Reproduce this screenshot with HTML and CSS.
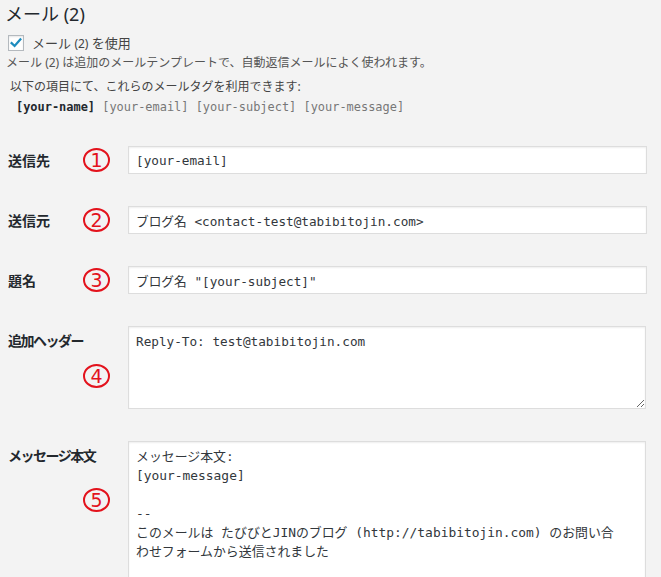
FILE: index.html
```html
<!DOCTYPE html>
<html lang="ja">
<head>
<meta charset="utf-8">
<title>メール (2)</title>
<link rel="stylesheet" href="styles.css">
</head>
<body>
<div class="page">
  <h2 class="title">メール (2)</h2>
  <label class="use">
    <span class="check"><svg viewBox="0 0 16 16" width="14" height="14"><path d="M3 8.2 L6.4 11.4 L13 3.8" fill="none" stroke="#1e8cbe" stroke-width="2.6" stroke-linecap="square"/></svg></span>
    <span class="use-text">メール <span class="num">(2)</span> を使用</span>
  </label>
  <p class="desc">メール <span class="num">(2)</span> は追加のメールテンプレートで、自動返信メールによく使われます。</p>
  <div class="tags">
    <p class="tags-lead">以下の項目にて、これらのメールタグを利用できます:</p>
    <p class="tags-list"><span class="tag used">[your-name]</span> <span class="tag">[your-email]</span> <span class="tag">[your-subject]</span> <span class="tag">[your-message]</span></p>
  </div>

  <div class="form">
    <div class="row">
      <div class="label">送信先<span class="mark m-line">1</span></div>
      <input class="field" type="text" value="[your-email]">
    </div>
    <div class="row">
      <div class="label">送信元<span class="mark m-line">2</span></div>
      <input class="field" type="text" value="ブログ名 <contact-test@tabibitojin.com>">
    </div>
    <div class="row">
      <div class="label">題名<span class="mark m-line">3</span></div>
      <input class="field" type="text" value="ブログ名 &quot;[your-subject]&quot;">
    </div>
    <div class="row">
      <div class="label"><span class="kana">追加ヘッダー</span><span class="mark m-four">4</span></div>
      <textarea class="area area-short" wrap="off">Reply-To: test@tabibitojin.com</textarea>
    </div>
    <div class="row">
      <div class="label"><span class="kana">メッセージ本文</span><span class="mark m-five">5</span></div>
      <textarea class="area area-long" wrap="off">メッセージ本文:
[your-message]

--
このメールは たびびとJINのブログ (http://tabibitojin.com) のお問い合
わせフォームから送信されました</textarea>
    </div>
  </div>
</div>
</body>
</html>
```

FILE: styles.css
```css
html, body {
  margin: 0;
  padding: 0;
  background: #f3f3f3;
}

body {
  font-family: "Noto Sans", "Noto Sans CJK JP", sans-serif;
  color: #444;
  overflow: hidden;
}

.page {
  padding-top: 2px;
}

.title {
  margin: 0;
  padding-left: 5px;
  font-size: 18px;
  line-height: 24px;
  font-weight: 400;
  color: #23282d;
}

.use {
  display: flex;
  align-items: center;
  gap: 8px;
  margin: 9px 0 0 8px;
  height: 16px;
}

.check {
  box-sizing: border-box;
  width: 16px;
  height: 16px;
  border: 1px solid #b4b9be;
  background: #fff;
  box-shadow: inset 0 1px 2px rgba(0, 0, 0, 0.1);
  display: flex;
  align-items: center;
  justify-content: center;
}

.use-text {
  font-size: 13px;
  line-height: 16px;
  color: #444;
}

.num {
  font-size: 12px;
}

.desc {
  margin: 2px 0 0 6px;
  font-size: 12px;
  line-height: 20px;
  color: #555;
}

.tags {
  margin-top: 4px;
}

.tags-lead {
  margin: 0 0 0 10px;
  font-size: 12px;
  line-height: 20px;
  color: #444;
}

.tags-list {
  margin: 0 0 0 16px;
  font-family: "DejaVu Sans Mono", monospace;
  font-size: 11.95px;
  line-height: 20px;
  color: #777;
}

.tag.used {
  font-weight: 700;
  color: #23282d;
}

.form {
  margin: 29px 0 0 8px;
  display: flex;
  flex-direction: column;
  gap: 32px;
}

.row {
  display: grid;
  grid-template-columns: 120px 519px;
  align-items: start;
}

.label {
  position: relative;
  font-family: "Noto Sans CJK JP", sans-serif;
  font-size: 14px;
  line-height: 28px;
  font-weight: 700;
  color: #23282d;
}

.kana {
  letter-spacing: -1.5px;
}

.mark {
  position: absolute;
  left: 75px;
  box-sizing: border-box;
  width: 27px;
  height: 24px;
  border: 2px solid #e3121c;
  border-radius: 50%;
  color: #e3121c;
  font-family: "DejaVu Sans", sans-serif;
  font-size: 19px;
  line-height: 20px;
  font-weight: 400;
  letter-spacing: 0;
  text-align: center;
}

.m-line { top: 2px; }
.m-four { top: 38px; }
.m-five { top: 47px; }

.field,
.area {
  box-sizing: border-box;
  margin: 0;
  width: 519px;
  border: 1px solid #ddd;
  background: #fff;
  box-shadow: inset 0 1px 2px rgba(0, 0, 0, 0.07);
  font-family: "DejaVu Sans Mono", "Noto Sans CJK JP", monospace;
  font-size: 12.7px;
  color: #32373c;
  outline: none;
}

.field {
  height: 28px;
  padding: 0 7px;
  line-height: 26px;
}

.area {
  display: block;
  padding: 5px 7px;
  line-height: 19px;
  resize: vertical;
  overflow: hidden;
  white-space: pre;
}

.area-short {
  width: 518px;
  height: 83px;
}

.area-long {
  width: 518px;
  height: 200px;
  font-size: 12.9px;
}
```
